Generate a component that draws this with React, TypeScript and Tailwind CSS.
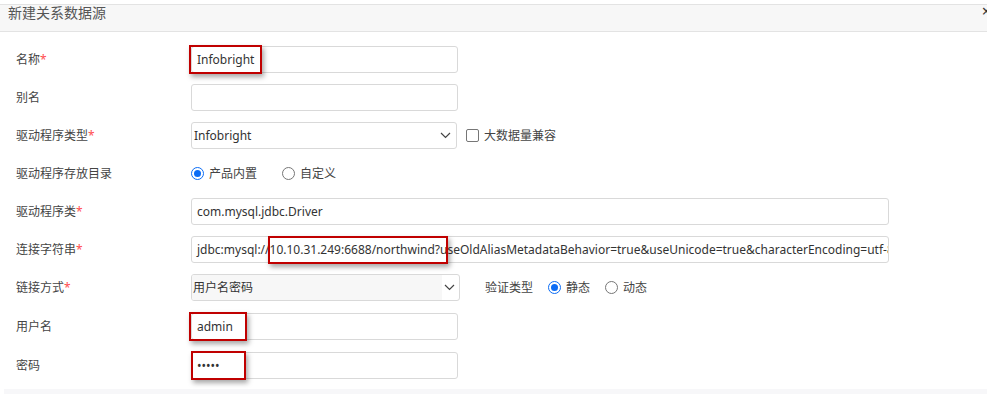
import React from "react";

const font = { fontFamily: '"Noto Sans", "Noto Sans CJK SC", sans-serif' };

function Label({ text, req }: { text: string; req?: boolean }) {
  return (
    <div className="w-[191px] shrink-0 pl-[16px] text-[12px] text-[#444]">
      {text}
      {req && <span className="text-[#ff4d4f]">*</span>}
    </div>
  );
}

function Radio({ checked, label }: { checked?: boolean; label: string }) {
  return (
    <div className="flex items-center">
      {checked ? (
        <span className="flex h-[13px] w-[13px] items-center justify-center rounded-full border-[1.5px] border-[#0b6cf5] bg-white">
          <span className="h-[7px] w-[7px] rounded-full bg-[#0b6cf5]" />
        </span>
      ) : (
        <span className="h-[13px] w-[13px] rounded-full border border-[#767676] bg-white" />
      )}
      <span className="ml-[5px] text-[12px] text-[#444]">{label}</span>
    </div>
  );
}

function Chevron() {
  return (
    <svg width="11" height="7" viewBox="0 0 11 7" className="shrink-0">
      <path d="M1 1 L5.5 5.5 L10 1" fill="none" stroke="#444" strokeWidth="1.2" />
    </svg>
  );
}

function RedBox({ className }: { className: string }) {
  return (
    <div
      className={
        "pointer-events-none absolute border-2 border-[#c00000] shadow-[2px_3px_5px_rgba(0,0,0,0.35)] " +
        className
      }
    />
  );
}

export default function App() {
  const inputCls =
    "h-[27px] rounded-[3px] border border-[#d9d9d9] bg-white px-[5px] text-[12px] text-[#333] flex items-center overflow-hidden whitespace-nowrap";
  return (
    <div className="relative h-[394px] w-[987px] overflow-hidden bg-white" style={font}>
      <div className="mt-[4px] flex h-[28px] border-y border-[#e3e3e3] bg-[#f7f7f7]">
        <div className="pl-[8px] pt-0 text-[14px] leading-[16px] text-[#555]">新建关系数据源</div>
        <div className="ml-auto mr-[-4px] mt-[-2px] text-[16px] leading-[16px] text-[#333]">×</div>
      </div>

      <div className="pt-[14px]">
        <div className="mb-[11px] flex items-center">
          <Label text="名称" req />
          <div className={inputCls + " w-[267px]"}>Infobright</div>
        </div>
        <div className="mb-[11px] flex items-center">
          <Label text="别名" />
          <div className={inputCls + " w-[267px]"}></div>
        </div>
        <div className="mb-[11px] flex items-center">
          <Label text="驱动程序类型" req />
          <div className="flex h-[27px] w-[266px] items-center justify-between rounded-[3px] border border-[#d9d9d9] bg-white pl-[2px] pr-[5px] text-[12px] text-[#333]">
            <span>Infobright</span>
            <Chevron />
          </div>
          <div className="ml-[9px] flex items-center">
            <span className="h-[13px] w-[13px] rounded-[2px] border border-[#767676] bg-white" />
            <span className="ml-[5px] text-[12px] text-[#444]">大数据量兼容</span>
          </div>
        </div>
        <div className="mb-[11px] flex h-[27px] items-center">
          <Label text="驱动程序存放目录" />
          <div className="flex items-center gap-[25px]">
            <Radio checked label="产品内置" />
            <Radio label="自定义" />
          </div>
        </div>
        <div className="mb-[11px] flex items-center">
          <Label text="驱动程序类" req />
          <div className={inputCls + " w-[698px]"}>com.mysql.jdbc.Driver</div>
        </div>
        <div className="mb-[11px] flex items-center">
          <Label text="连接字符串" req />
          <div className={inputCls + " w-[698px] text-[12.3px]"}>
            jdbc:mysql://10.10.31.249:6688/northwind?useOldAliasMetadataBehavior=true&amp;useUnicode=true&amp;characterEncoding=utf-8
          </div>
        </div>
        <div className="mb-[12px] flex items-center">
          <Label text="链接方式" req />
          <div className="flex h-[27px] w-[269px] items-center overflow-hidden rounded-[3px] border border-[#d9d9d9] bg-white text-[12px] text-[#333]">
            <div className="flex h-full flex-1 items-center bg-[#f7f7f7] pl-[1px]">用户名密码</div>
            <div className="flex w-[17px] justify-center pr-[2px]">
              <Chevron />
            </div>
          </div>
          <div className="ml-[25px] text-[12px] text-[#444]">验证类型</div>
          <div className="ml-[15px] flex items-center gap-[15px]">
            <Radio checked label="静态" />
            <Radio label="动态" />
          </div>
        </div>
        <div className="mb-[12px] flex items-center">
          <Label text="用户名" />
          <div className={inputCls + " w-[267px]"}>admin</div>
        </div>
        <div className="flex items-center">
          <Label text="密码" />
          <div className={inputCls + " w-[267px] text-[10px]"}>•••••</div>
        </div>
      </div>

      <div className="absolute bottom-0 left-[4px] right-0 h-[5px] bg-[#f7f7f9]" />

      <RedBox className="left-[189px] top-[45px] h-[29px] w-[73px]" />
      <RedBox className="left-[268px] top-[236px] h-[28px] w-[180px]" />
      <RedBox className="left-[189px] top-[312px] h-[29px] w-[58px]" />
      <RedBox className="left-[191px] top-[351px] h-[29px] w-[55px]" />
    </div>
  );
}
